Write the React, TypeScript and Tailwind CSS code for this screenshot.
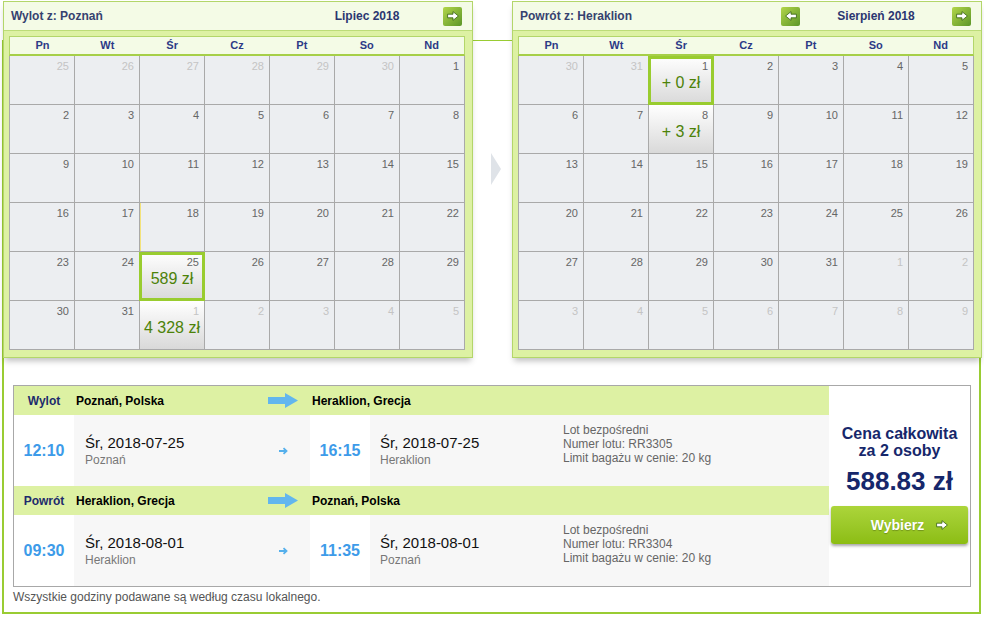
import React from "react";

type Cell = { d: number; o?: boolean; price?: string; sel?: boolean; hl?: boolean };

const DAYS = ["Pn", "Wt", "Śr", "Cz", "Pt", "So", "Nd"];

const r = (from: number, to: number, o = false): Cell[] => {
  const a: Cell[] = [];
  for (let i = from; i <= to; i++) a.push({ d: i, o });
  return a;
};

const julyCells: Cell[] = [
  ...r(25, 30, true),
  { d: 1 },
  ...r(2, 17),
  { d: 18, hl: true },
  ...r(19, 24),
  { d: 25, price: "589 zł", sel: true },
  ...r(26, 31),
  { d: 1, o: true, price: "4 328 zł" },
  ...r(2, 5, true),
];

const augCells: Cell[] = [
  ...r(30, 31, true),
  { d: 1, price: "+ 0 zł", sel: true },
  ...r(2, 7),
  { d: 8, price: "+ 3 zł" },
  ...r(9, 31),
  ...r(1, 9, true),
];

function WhiteArrow({ left }: { left?: boolean }) {
  return (
    <svg width="12" height="10" viewBox="0 0 12 10" className={left ? "rotate-180" : ""}>
      <polygon points="0.6,3.2 6,3.2 6,0.6 11.4,5 6,9.4 6,6.8 0.6,6.8" fill="#fff" stroke="#34600e" strokeWidth="0.8" />
    </svg>
  );
}

function NavBtn({ left }: { left?: boolean }) {
  return (
    <div className="w-[19px] h-[19px] rounded-[2px] bg-linear-to-br from-[#b3d64a] to-[#5b9628] flex items-center justify-center">
      <WhiteArrow left={left} />
    </div>
  );
}

function Calendar({ title, month, prev, cells }: { title: string; month: string; prev?: boolean; cells: Cell[] }) {
  return (
    <div className="relative z-10 w-[470px] h-[357px] border border-[#b3d66a] bg-[#ddf1a3] shadow-[0_5px_6px_-2px_rgba(0,0,0,0.25)]">
      <div className="h-[29px] bg-[#f4fbe6] border-b border-[#bcdc78] flex items-center pl-[7px] pr-[10px]">
        <div className="flex-1 text-[12px] font-bold text-[#36426f]">{title}</div>
        <div className={prev ? "" : "invisible"}>
          <NavBtn left />
        </div>
        <div className="w-[152px] text-center text-[12px] font-bold text-[#2b3671]">{month}</div>
        <NavBtn />
      </div>
      <div className="pl-[5px] pt-[5px]">
        <div className="w-[456px] h-[20px] border border-[#b3d66a] border-b-2 border-b-[#a6cf48] bg-[#f4fbe6] grid grid-cols-7 items-center">
          {DAYS.map((d) => (
            <div key={d} className="text-center text-[11px] font-bold leading-none text-[#2c3a86]">
              {d}
            </div>
          ))}
        </div>
        <div className="w-[456px] grid grid-cols-[repeat(7,65px)] border-l border-[#a9a9a9]">
          {cells.map((c, i) => (
            <div
              key={i}
              className={`relative h-[49px] border-r border-b border-[#a9a9a9] ${
                c.price ? "bg-linear-to-b from-white to-[#d9d9d9]" : "bg-[#eceef1]"
              } ${c.hl ? "shadow-[inset_1px_0_0_#f3e27a]" : ""}`}
            >
              <div className={`text-right pr-[5px] pt-[4px] text-[11px] leading-[12px] ${c.o ? "text-[#c4c4c4]" : "text-[#666]"}`}>
                {c.d}
              </div>
              {c.price && (
                <div className="text-center text-[16px] leading-[18px] mt-[2px] text-[#4c8209] whitespace-nowrap">{c.price}</div>
              )}
              {c.sel && <div className="absolute -left-px top-0 -right-px -bottom-px border-[3px] border-[#99cc2f]" />}
            </div>
          ))}
        </div>
      </div>
    </div>
  );
}

function BigArrow() {
  return (
    <svg width="30" height="15" viewBox="0 0 30 15">
      <polygon points="0,4 17,4 17,0 30,7.5 17,15 17,11 0,11" fill="#62b6ee" />
    </svg>
  );
}

function SmallArrow() {
  return (
    <svg width="9" height="8" viewBox="0 0 9 8">
      <path d="M0 4h7M4.5 1.2L7.5 4L4.5 6.8" stroke="#56b0ec" strokeWidth="1.8" fill="none" />
    </svg>
  );
}

function HeaderRow({ label, from, to }: { label: string; from: string; to: string }) {
  return (
    <div className="h-[29px] bg-[#ddf1a3] flex items-center text-[12px] font-bold">
      <div className="w-[60px] text-center text-[#1d2b6c]">{label}</div>
      <div className="w-[182px] pl-[2px] text-black">{from}</div>
      <div className="w-[54px] flex justify-center">
        <BigArrow />
      </div>
      <div className="flex-1 pl-[2px] text-black">{to}</div>
    </div>
  );
}

function DetailRow({
  t1,
  d1,
  c1,
  t2,
  d2,
  c2,
  num,
}: {
  t1: string;
  d1: string;
  c1: string;
  t2: string;
  d2: string;
  c2: string;
  num: string;
}) {
  return (
    <div className="h-[71px] flex">
      <div className="w-[60px] bg-white flex items-center justify-center text-[16px] font-bold text-[#3d9be9]">{t1}</div>
      <div className="w-[182px] bg-[#f7f7f7] pl-[11px] flex flex-col justify-center">
        <div className="text-[15px] leading-[18px] text-[#111]">{d1}</div>
        <div className="text-[12px] leading-[16px] text-[#777]">{c1}</div>
      </div>
      <div className="w-[54px] bg-[#f7f7f7] flex items-center justify-center">
        <SmallArrow />
      </div>
      <div className="w-[60px] bg-white flex items-center justify-center text-[16px] font-bold text-[#3d9be9]">{t2}</div>
      <div className="w-[193px] bg-[#f7f7f7] pl-[10px] flex flex-col justify-center">
        <div className="text-[15px] leading-[18px] text-[#111]">{d2}</div>
        <div className="text-[12px] leading-[16px] text-[#777]">{c2}</div>
      </div>
      <div className="flex-1 bg-[#f7f7f7] pt-[8px] text-[12px] leading-[14px] text-[#666]">
        <div>Lot bezpośredni</div>
        <div>Numer lotu: {num}</div>
        <div>Limit bagażu w cenie: 20 kg</div>
      </div>
    </div>
  );
}

export default function App() {
  return (
    <div className="w-[984px] h-[617px] bg-white pt-[40px] pl-[2px] font-['Liberation_Sans',Arial,sans-serif]">
      <div className="w-[979px] h-[574px] border-t border-x-2 border-b-2 border-[#99cc33]">
        <div className="-mt-[40px] -ml-px -mr-[3px] flex items-start">
          <Calendar title="Wylot z: Poznań" month="Lipiec 2018" cells={julyCells} />
          <div className="flex-1 flex justify-center pl-[6px] pt-[152px]">
            <div className="w-0 h-0 border-y-[16px] border-y-transparent border-l-[10px] border-l-[#dfe3e8]" />
          </div>
          <Calendar title="Powrót z: Heraklion" month="Sierpień 2018" prev cells={augCells} />
        </div>

        <div className="ml-[9px] mr-[8px] mt-[27px] border border-[#a8a8a8] flex">
          <div className="w-[815px] flex flex-col">
            <HeaderRow label="Wylot" from="Poznań, Polska" to="Heraklion, Grecja" />
            <DetailRow t1="12:10" d1="Śr, 2018-07-25" c1="Poznań" t2="16:15" d2="Śr, 2018-07-25" c2="Heraklion" num="RR3305" />
            <HeaderRow label="Powrót" from="Heraklion, Grecja" to="Poznań, Polska" />
            <DetailRow t1="09:30" d1="Śr, 2018-08-01" c1="Heraklion" t2="11:35" d2="Śr, 2018-08-01" c2="Poznań" num="RR3304" />
          </div>
          <div className="flex-1 bg-white flex flex-col items-center pt-[39px]">
            <div className="text-[16px] leading-[17px] font-bold text-[#16276b] text-center">
              Cena całkowita
              <br />
              za 2 osoby
            </div>
            <div className="mt-[7px] text-[26px] leading-[30px] font-bold text-[#16276b]">588.83 zł</div>
            <div className="mt-[10px] w-[137px] h-[38px] rounded-[3px] bg-linear-to-b from-[#acd53a] to-[#8cbd12] shadow-[0_2px_3px_rgba(0,0,0,0.35)] flex items-center justify-center pl-[20px] gap-[12px]">
              <span className="text-[14px] font-bold text-white [text-shadow:0_1px_1px_rgba(0,0,0,0.25)]">Wybierz</span>
              <WhiteArrow />
            </div>
          </div>
        </div>
        <div className="ml-[9px] mt-[3px] text-[12px] leading-[14px] text-[#555]">
          Wszystkie godziny podawane są według czasu lokalnego.
        </div>
      </div>
    </div>
  );
}
